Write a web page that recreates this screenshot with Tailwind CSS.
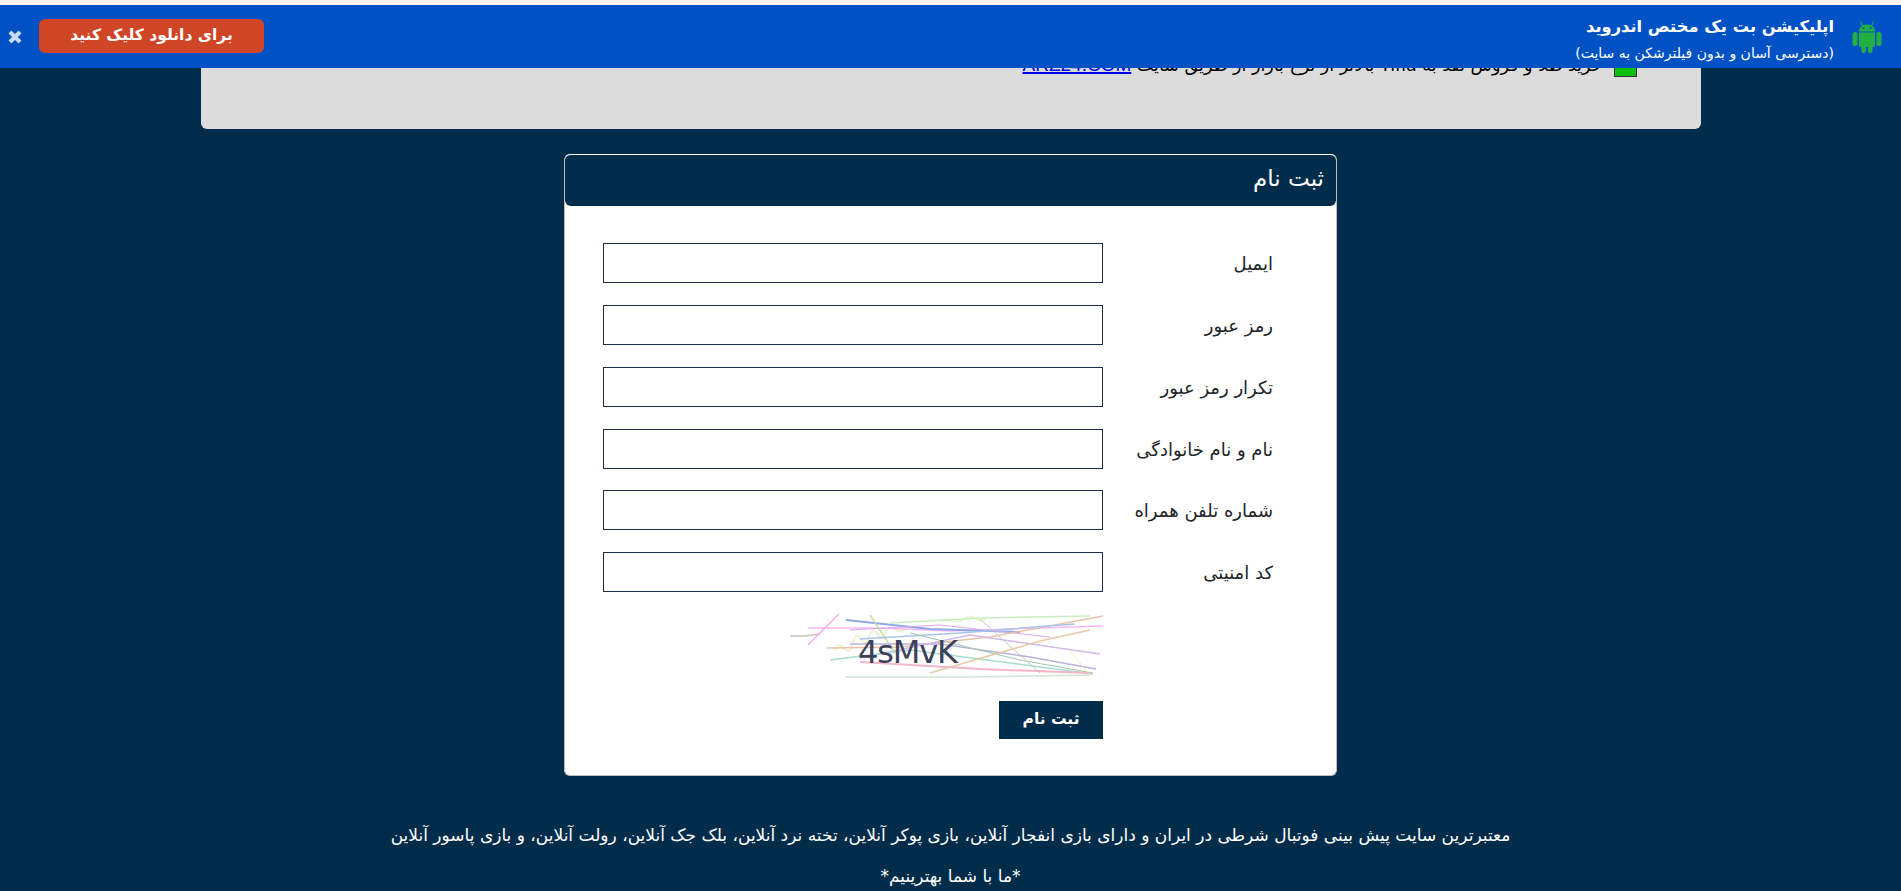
<!DOCTYPE html>
<html lang="fa" dir="rtl">
<head>
<meta charset="utf-8">
<title>ثبت نام</title>
<script src="https://cdn.jsdelivr.net/npm/@tailwindcss/browser@4"></script>
</head>
<body class="h-[891px] overflow-hidden bg-[#012c4a] font-['DejaVu_Sans',sans-serif] text-[#212529]">

  <!-- app banner, fixed over the page -->
  <div class="absolute left-0 top-0 z-10 w-full border-t-[5px] border-[#fff3ee]">
    <div class="flex h-[63px] items-center bg-[#0052c4] text-white" dir="ltr">
      <button class="ml-[7px] text-[#c8dcf5]">
        <svg class="block" width="16" height="14" viewBox="0 0 16 14"><path d="M3 2l10 10M13 2L3 12" stroke="currentColor" stroke-width="4"/></svg>
      </button>
      <a class="mb-[1px] ml-[16px] flex h-[34px] w-[225px] items-center justify-center rounded-md bg-[#cf4626] text-[15.5px] font-bold" dir="rtl">برای دانلود کلیک کنید</a>
      <div class="ml-auto pt-[6px] text-right" dir="rtl">
        <div class="text-[16.3px]/[24px] font-bold">اپلیکیشن بت یک مختص اندروید</div>
        <div class="mt-[2px] text-[14px]/[24px]">(دسترسی آسان و بدون فیلترشکن به سایت)</div>
      </div>
      <svg class="ml-[18px] mr-[19px]" width="30" height="33" viewBox="0 0 30 33" fill="#22b043">
        <path d="M7 11.5C7 7.5 10 4.5 15 4.5s8 3 8 7z"/>
        <path d="M10.5 6.5L8.5 1M19.5 6.5l2-5.5" stroke="#22b043" stroke-width="1"/>
        <circle cx="11.5" cy="8" r="1" fill="#0052c4"/>
        <circle cx="18.5" cy="8" r="1" fill="#0052c4"/>
        <path d="M7 12.5h16V25a2 2 0 0 1-2 2H9a2 2 0 0 1-2-2z"/>
        <rect x="0.5" y="12" width="5" height="14" rx="2.5"/>
        <rect x="24.5" y="12" width="5" height="14" rx="2.5"/>
        <rect x="9.5" y="25" width="4.5" height="8" rx="2.2"/>
        <rect x="16" y="25" width="4.5" height="8" rx="2.2"/>
      </svg>
    </div>
  </div>

  <!-- notice panel, scrolled mostly under the banner -->
  <div class="mx-auto mt-[-60px] h-[189px] w-[1500px] rounded-b-md bg-[#dcdcdc] pt-[111px] text-black">
    <div class="mr-[64px] flex items-center gap-[11px] text-[17.5px]">
      <span class="h-[23px] w-[23px] border border-[#333] bg-[#0fbf0f]"></span>
      <span>خرید طلا و فروش نقد به Tifia بالاتر از نرخ بازار از طریق سایت <a class="font-['Liberation_Sans',sans-serif] text-[19px] text-[#0000ee] underline decoration-2">ARZ24.COM</a></span>
    </div>
  </div>

  <!-- register card -->
  <div class="mx-auto mt-[25px] w-[773px] rounded-md border border-[#bdbdbd] border-t-white bg-white">
    <h2 class="mt-[-1px] flex h-[52px] items-center rounded-md border-t border-white bg-[#012c4a] px-3 pb-[4px] text-[23px] text-white">ثبت نام</h2>
    <form class="pt-[37px] pb-[36px] pr-[63px]">
      <div class="mb-[22px] flex h-10 items-center"><label class="w-[170px] pt-[2px] text-lg">ایمیل</label><input class="h-10 w-[500px] border border-[#1f2a4d]"></div>
      <div class="mb-[22px] flex h-10 items-center"><label class="w-[170px] pt-[2px] text-lg">رمز عبور</label><input class="h-10 w-[500px] border border-[#1f2a4d]"></div>
      <div class="mb-[22px] flex h-10 items-center"><label class="w-[170px] pt-[2px] text-lg">تکرار رمز عبور</label><input class="h-10 w-[500px] border border-[#1f2a4d]"></div>
      <div class="mb-[21px] flex h-10 items-center"><label class="w-[170px] pt-[2px] text-lg">نام و نام خانوادگی</label><input class="h-10 w-[500px] border border-[#1f2a4d]"></div>
      <div class="mb-[22px] flex h-10 items-center"><label class="w-[170px] pt-[2px] text-lg">شماره تلفن همراه</label><input class="h-10 w-[500px] border border-[#1f2a4d]"></div>
      <div class="flex h-10 items-center"><label class="w-[170px] pt-[2px] text-lg">کد امنیتی</label><input class="h-10 w-[500px] border border-[#1f2a4d]"></div>
      <!-- captcha image -->
      <svg class="mr-[170px] mt-[21px] block" width="313" height="70" viewBox="0 0 313 70" fill="none" stroke-width="1">
        <path d="M45 38c6-18 12 14 18-8s10 14 16-6 10 12 16-4 14 8 20-6M150 8c10-6 14 6 24-2s12 6 22 0" stroke="#eef3d2" stroke-width="2"/>
        <path d="M0 23H15L30 21" stroke="#cdbfb4" stroke-width="1.5"/>
        <path d="M18 32L49 1" stroke="#f2b0ef" stroke-width="1.5"/>
        <path d="M18 15H90L160 18L313 13" stroke="#fbb6f5" stroke-width="1.5"/>
        <path d="M56 7L140 16L230 19" stroke="#8fa8e6" stroke-width="2"/>
        <path d="M60 17L150 12L260 24" stroke="#d8a8ee"/>
        <path d="M80 2L105 40" stroke="#c5e0a0" stroke-width="1.5"/>
        <path d="M100 10L192 5L300 3" stroke="#c9efc0" stroke-width="1.5"/>
        <path d="M37 35L110 34L200 24L313 3" stroke="#e6c3a8" stroke-width="1.5"/>
        <path d="M70 26L170 20L285 11" stroke="#a8c4ea" stroke-width="1.5"/>
        <path d="M60 31H150L240 44L306 56" stroke="#b7b3dc" stroke-width="1.5"/>
        <path d="M70 45L180 22L310 41" stroke="#d3b6ea" stroke-width="1.5"/>
        <path d="M40 47L120 37L220 50L303 61" stroke="#a9dcd0" stroke-width="1.5"/>
        <path d="M70 49L190 56L300 60" stroke="#f5b5c8" stroke-width="2"/>
        <path d="M120 20L230 47L303 60" stroke="#9fc9a6"/>
        <path d="M190 6L250 60" stroke="#c8c8c8"/>
        <path d="M140 60L250 28L300 17" stroke="#e8c9a8" stroke-width="1.5"/>
        <path d="M55 64H180L300 62" stroke="#cfe6d6" stroke-width="1.5"/>
        <path d="M280 38L300 62" stroke="#f2eca8"/>
        <text x="68" y="50" direction="ltr" fill="#3c4059" font-family="DejaVu Sans, sans-serif" font-size="32" textLength="100">4sMvK</text>
      </svg>
      <button type="button" class="mr-[170px] mt-[18px] block h-[38px] w-[104px] bg-[#012c4a] text-[15.5px] font-bold text-white">ثبت نام</button>
    </form>
  </div>

  <p class="mt-[47px] text-center text-[17px] text-white">معتبرترین سایت پیش بینی فوتبال شرطی در ایران و دارای بازی انفجار آنلاین، بازی پوکر آنلاین، تخته نرد آنلاین، بلک جک آنلاین، رولت آنلاین، و بازی پاسور آنلاین</p>
  <p class="mt-[15px] text-center text-[17px] text-white">*ما با شما بهترینیم*</p>
</body>
</html>
